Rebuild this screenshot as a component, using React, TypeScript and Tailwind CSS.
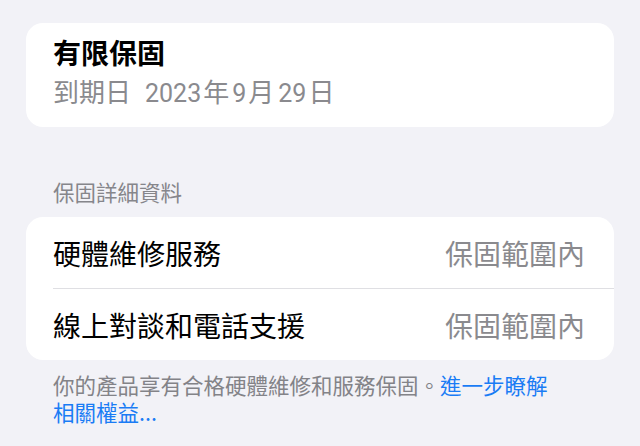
import React from "react";

const cjk = "font-['Noto_Sans_CJK_TC','Noto_Sans_CJK_SC',sans-serif]";

export default function App() {
  return (
    <div
      className={`w-[640px] h-[446px] overflow-hidden bg-[#f2f2f7] px-[26px] pt-[23px] ${cjk}`}
    >
      {/* Warranty card */}
      <div className="rounded-[17px] bg-white pl-[27px] pt-[11px] pb-[16px]">
        <div className="text-[28px] leading-[36px] font-semibold text-black">
          有限保固
        </div>
        <div className="mt-[4px] text-[26px] leading-[34px] text-[#8a8a8e] whitespace-nowrap">
          <span>到期日</span>
          <span className="ml-[14px] text-[25px] font-['Roboto',sans-serif]">2023</span>
          <span className="ml-[2px]">年</span>
          <span className="ml-[3px] text-[25px] font-['Roboto',sans-serif]">9</span>
          <span className="ml-[2px]">月</span>
          <span className="ml-[4px] text-[25px] font-['Roboto',sans-serif]">29</span>
          <span className="ml-[2px]">日</span>
        </div>
      </div>

      {/* Section header */}
      <div className="mt-[51px] pl-[27px] text-[21.5px] leading-[28px] text-[#86868b]">
        保固詳細資料
      </div>

      {/* Details card */}
      <div className="mt-[11px] rounded-[17px] bg-white">
        <div className="flex h-[71px] items-center justify-between pl-[27px] pr-[29px]">
          <span className="text-[28px] text-black">硬體維修服務</span>
          <span className="text-[28px] text-[#8a8a8e]">保固範圍內</span>
        </div>
        <div className="ml-[27px] h-px bg-[#dfdfe3]" />
        <div className="flex h-[71px] items-center justify-between pl-[27px] pr-[29px]">
          <span className="text-[28px] text-black">線上對談和電話支援</span>
          <span className="text-[28px] text-[#8a8a8e]">保固範圍內</span>
        </div>
      </div>

      {/* Footer */}
      <div className="mt-[11px] pl-[27px] text-[21.5px] leading-[27px] text-[#838388]">
        你的產品享有合格硬體維修和服務保固。
        <span className="text-[#1a7cf5]">
          進一步瞭解
          <br />
          相關權益...
        </span>
      </div>
    </div>
  );
}
